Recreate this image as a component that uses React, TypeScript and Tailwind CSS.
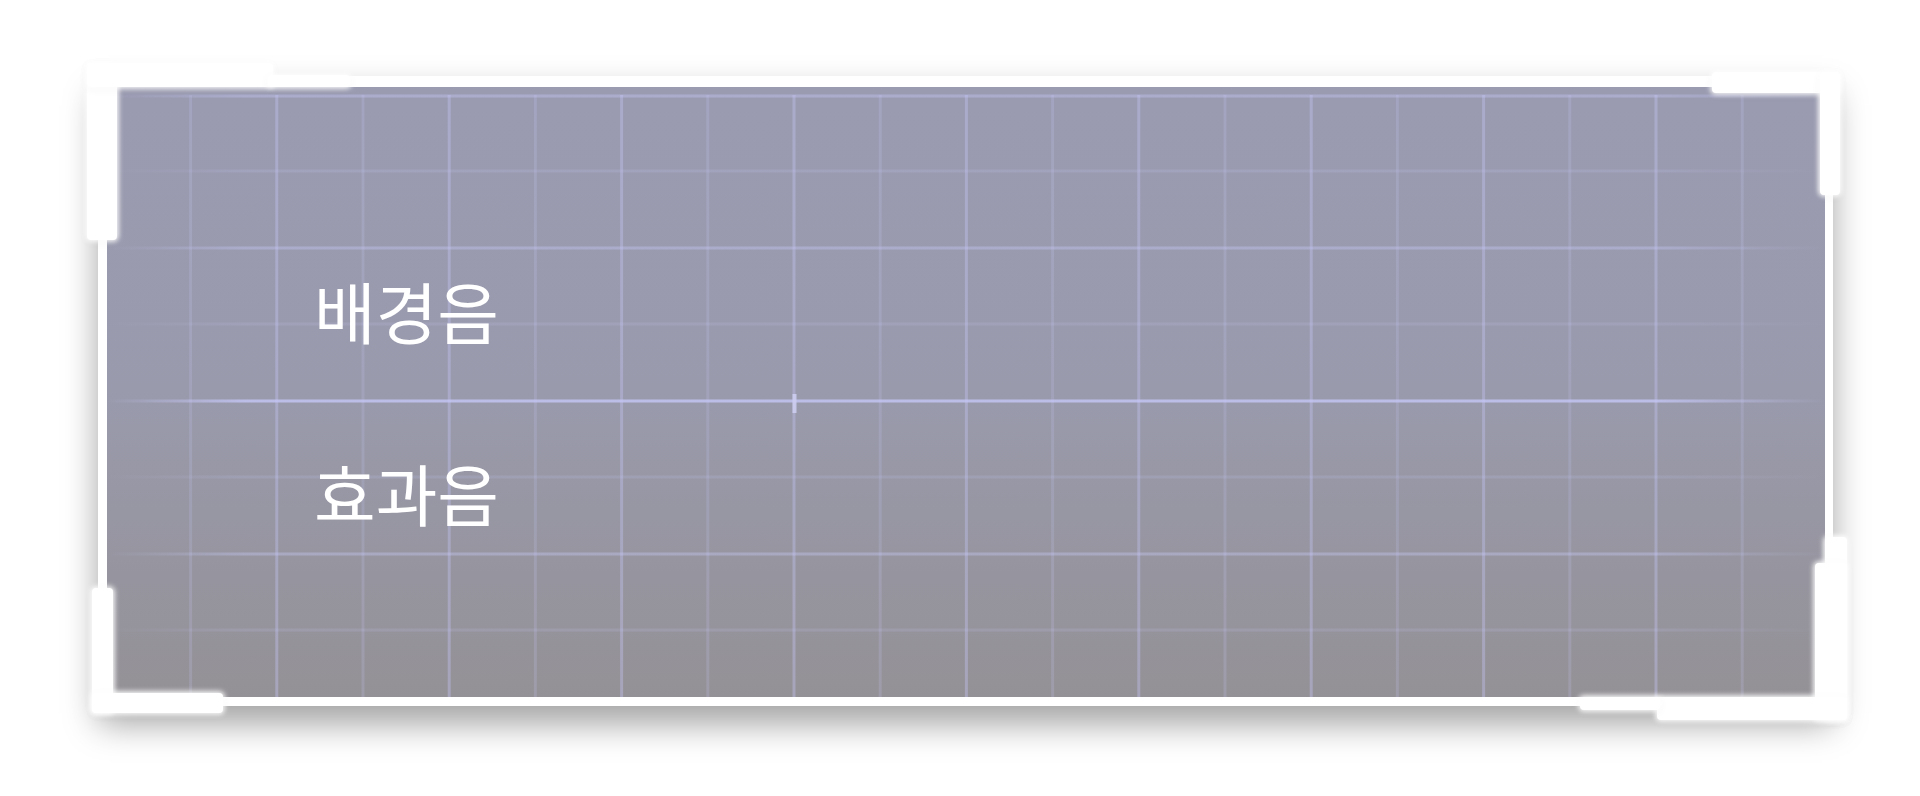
import React from 'react';

const W = 1718;
const H = 610;
const cols = Array.from({ length: 19 }, (_, i) => i - 7);
const rows = [
  { y: 9, major: true },
  { y: 84, major: false },
  { y: 161, major: true },
  { y: 237, major: false },
  { y: 314, center: true, major: true },
  { y: 390, major: false },
  { y: 467, major: true },
  { y: 543, major: false },
];

// grid lines drawn behind the labels
function Grid() {
  return (
    <svg className="absolute inset-0" width={W} height={H} viewBox={`0 0 ${W} ${H}`}>
      <defs>
        <linearGradient id="fadeX" x1="0" x2="1" y1="0" y2="0">
          <stop offset="0" stopColor="#c3c4f2" stopOpacity="0" />
          <stop offset="0.08" stopColor="#c3c4f2" stopOpacity="1" />
          <stop offset="0.9" stopColor="#c3c4f2" stopOpacity="1" />
          <stop offset="1" stopColor="#c3c4f2" stopOpacity="0" />
        </linearGradient>
      </defs>
      {cols.map((n) => {
        const x = 687 + n * 86.2;
        const major = n % 2 === 0;
        return (
          <rect
            key={n}
            x={x - 1.5}
            y={8}
            width={3}
            height={H - 8}
            fill="#c3c4f2"
            opacity={major ? 0.4 : 0.22}
          />
        );
      })}
      {rows.map((r) => (
        <rect
          key={r.y}
          x={0}
          y={r.y - 1.5}
          width={W}
          height={3}
          fill="url(#fadeX)"
          opacity={r.center ? 0.85 : r.major ? 0.42 : 0.18}
        />
      ))}
      <rect x={685.5} y={307} width={4} height={19} fill="#cccdf0" opacity={0.9} />
    </svg>
  );
}

function Bit({ className }: { className: string }) {
  return (
    <div
      className={`absolute bg-white rounded-[4px] shadow-[0_0_5px_2px_rgba(255,255,255,0.9),0_2px_10px_rgba(0,0,0,0.05)] ${className}`}
    />
  );
}

export default function App() {
  return (
    <div
      className="w-full h-[796px] bg-white pt-[76px] pl-[98px]"
      style={{ fontFamily: '"Noto Sans CJK KR", "Noto Sans", sans-serif' }}
    >
      <div className="relative w-[1735px] h-[630px] bg-white pt-[11px] pl-[9px] pr-[8px] pb-[9px] shadow-[0_18px_32px_rgba(0,0,0,0.36)]">
        <div className="relative w-full h-full bg-linear-to-b from-[#9a9bb1] via-[#999aac] to-[#949196] overflow-hidden">
          <Grid />
          <div className="relative flex flex-col gap-[115px] pl-[207px] pt-[189px] text-white text-[67px] font-normal leading-none">
            <span>배경음</span>
            <span>효과음</span>
          </div>
        </div>

        {/* corner brackets */}
        <Bit className="left-[-11px] top-[-13px] w-[30px] h-[177px]" />
        <Bit className="left-[-11px] top-[-13px] w-[186px] h-[24px]" />
        <Bit className="left-[170px] top-[-1px] w-[82px] h-[12px]" />

        <Bit className="left-[1614px] top-[-4px] w-[128px] h-[21px]" />
        <Bit className="left-[1722px] top-[-4px] w-[20px] h-[123px]" />

        <Bit className="left-[-6px] top-[512px] w-[21px] h-[125px]" />
        <Bit className="left-[-6px] top-[617px] w-[131px] h-[20px]" />

        <Bit className="left-[1727px] top-[461px] w-[22px] h-[183px]" />
        <Bit className="left-[1717px] top-[487px] w-[32px] h-[157px]" />
        <Bit className="left-[1559px] top-[621px] w-[190px] h-[23px]" />
        <Bit className="left-[1482px] top-[621px] w-[80px] h-[13px]" />
      </div>
    </div>
  );
}
